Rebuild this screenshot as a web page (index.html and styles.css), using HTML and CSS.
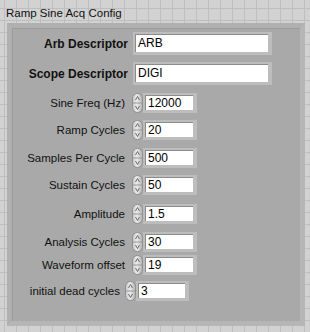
FILE: index.html
```html
<!DOCTYPE html>
<html>
<head>
    <meta charset="utf-8" />
    <title>Ramp Sine Acq Config</title>
    <link rel="stylesheet" href="styles.css">
</head>
<body>
    <div class="title">Ramp Sine Acq Config</div>
    <div class="cluster">
        <div class="row str">
            <span class="lbl">Arb Descriptor</span>
            <div class="sbox">ARB</div>
        </div>
        <div class="row str">
            <span class="lbl">Scope Descriptor</span>
            <div class="sbox">DIGI</div>
        </div>
        <div class="row num r1">
            <span class="lbl">Sine Freq (Hz)</span>
            <svg class="spin" viewBox="0 0 11 20"><rect x="0.5" y="0.5" width="10" height="19" rx="5" fill="url(#g)" stroke="#8e8e8e"/><line x1="1" y1="10" x2="10" y2="10" stroke="#9a9a9a"/><path d="M3.5 7 L5.5 3.5 L7.5 7" fill="none" stroke="#6a6a6a"/><path d="M3.5 13 L5.5 16.5 L7.5 13" fill="none" stroke="#6a6a6a"/></svg>
            <div class="nbox">12000</div>
        </div>
        <div class="row num r2">
            <span class="lbl">Ramp Cycles</span>
            <svg class="spin" viewBox="0 0 11 20"><rect x="0.5" y="0.5" width="10" height="19" rx="5" fill="url(#g)" stroke="#8e8e8e"/><line x1="1" y1="10" x2="10" y2="10" stroke="#9a9a9a"/><path d="M3.5 7 L5.5 3.5 L7.5 7" fill="none" stroke="#6a6a6a"/><path d="M3.5 13 L5.5 16.5 L7.5 13" fill="none" stroke="#6a6a6a"/></svg>
            <div class="nbox">20</div>
        </div>
        <div class="row num r3">
            <span class="lbl">Samples Per Cycle</span>
            <svg class="spin" viewBox="0 0 11 20"><rect x="0.5" y="0.5" width="10" height="19" rx="5" fill="url(#g)" stroke="#8e8e8e"/><line x1="1" y1="10" x2="10" y2="10" stroke="#9a9a9a"/><path d="M3.5 7 L5.5 3.5 L7.5 7" fill="none" stroke="#6a6a6a"/><path d="M3.5 13 L5.5 16.5 L7.5 13" fill="none" stroke="#6a6a6a"/></svg>
            <div class="nbox">500</div>
        </div>
        <div class="row num r4">
            <span class="lbl">Sustain Cycles</span>
            <svg class="spin" viewBox="0 0 11 20"><rect x="0.5" y="0.5" width="10" height="19" rx="5" fill="url(#g)" stroke="#8e8e8e"/><line x1="1" y1="10" x2="10" y2="10" stroke="#9a9a9a"/><path d="M3.5 7 L5.5 3.5 L7.5 7" fill="none" stroke="#6a6a6a"/><path d="M3.5 13 L5.5 16.5 L7.5 13" fill="none" stroke="#6a6a6a"/></svg>
            <div class="nbox">50</div>
        </div>
        <div class="row num r5">
            <span class="lbl">Amplitude</span>
            <svg class="spin" viewBox="0 0 11 20"><rect x="0.5" y="0.5" width="10" height="19" rx="5" fill="url(#g)" stroke="#8e8e8e"/><line x1="1" y1="10" x2="10" y2="10" stroke="#9a9a9a"/><path d="M3.5 7 L5.5 3.5 L7.5 7" fill="none" stroke="#6a6a6a"/><path d="M3.5 13 L5.5 16.5 L7.5 13" fill="none" stroke="#6a6a6a"/></svg>
            <div class="nbox">1.5</div>
        </div>
        <div class="row num r6">
            <span class="lbl">Analysis Cycles</span>
            <svg class="spin" viewBox="0 0 11 20"><rect x="0.5" y="0.5" width="10" height="19" rx="5" fill="url(#g)" stroke="#8e8e8e"/><line x1="1" y1="10" x2="10" y2="10" stroke="#9a9a9a"/><path d="M3.5 7 L5.5 3.5 L7.5 7" fill="none" stroke="#6a6a6a"/><path d="M3.5 13 L5.5 16.5 L7.5 13" fill="none" stroke="#6a6a6a"/></svg>
            <div class="nbox">30</div>
        </div>
        <div class="row num r7">
            <span class="lbl">Waveform offset</span>
            <svg class="spin" viewBox="0 0 11 20"><rect x="0.5" y="0.5" width="10" height="19" rx="5" fill="url(#g)" stroke="#8e8e8e"/><line x1="1" y1="10" x2="10" y2="10" stroke="#9a9a9a"/><path d="M3.5 7 L5.5 3.5 L7.5 7" fill="none" stroke="#6a6a6a"/><path d="M3.5 13 L5.5 16.5 L7.5 13" fill="none" stroke="#6a6a6a"/></svg>
            <div class="nbox">19</div>
        </div>
        <div class="row num r8">
            <span class="lbl">initial dead cycles</span>
            <svg class="spin" viewBox="0 0 11 20"><rect x="0.5" y="0.5" width="10" height="19" rx="5" fill="url(#g)" stroke="#8e8e8e"/><line x1="1" y1="10" x2="10" y2="10" stroke="#9a9a9a"/><path d="M3.5 7 L5.5 3.5 L7.5 7" fill="none" stroke="#6a6a6a"/><path d="M3.5 13 L5.5 16.5 L7.5 13" fill="none" stroke="#6a6a6a"/></svg>
            <div class="nbox">3</div>
        </div>
    </div>
    <svg class="defs" width="0" height="0">
        <defs>
            <linearGradient id="g" x1="0" y1="0" x2="1" y2="0">
                <stop offset="0" stop-color="#c4c4c4"/>
                <stop offset="0.45" stop-color="#ececec"/>
                <stop offset="1" stop-color="#b0b0b0"/>
            </linearGradient>
        </defs>
    </svg>
</body>
</html>
```

FILE: styles.css
```css
body {
    margin:0;
    width:310px;
    height:332px;
    overflow:hidden;
    font-family:"Liberation Sans", Arial, sans-serif;
    font-size:12px;
    color:#111;
    background-color:#d2d2d2;
    background-image:
        linear-gradient(to right, #bfbfbf 1px, transparent 1px),
        linear-gradient(to bottom, #bfbfbf 1px, transparent 1px);
    background-size:12px 12px;
    background-position:4px 8px;
}
.title {
    height:17px;
    line-height:17px;
    padding:5px 0 0 6px;
    white-space:nowrap;
    font-size:11.5px;
}
.cluster {
    margin:1px 0 0 7px;
    width:288px;
    height:289px;
    border:5px solid #b6b6b6;
    border-top-color:#b0b0b0;
    border-left-color:#b0b0b0;
    background:#a9a9a9;
    box-shadow:inset 1px 1px 0 #9a9a9a;
    padding-top:4px;
    box-sizing:content-box;
}
.row {
    display:flex;
    align-items:center;
}
.lbl {
    flex:none;
    text-align:right;
    white-space:nowrap;
}
.str {
    height:23px;
    margin-bottom:7px;
}
.str .lbl {
    width:116px;
    margin-right:5px;
    font-weight:bold;
    font-size:12px;
}
.sbox, .nbox {
    box-sizing:border-box;
    background:#fff;
    border:2px solid #bdbdbd;
    border-right-width:4px;
    border-bottom-width:3px;
    box-shadow:inset 1px 1px 0 #8c8c8c;
    padding-left:3px;
    color:#000;
    line-height:16px;
    font-size:12px;
}
.sbox {
    width:139px;
    height:23px;
    padding-top:1px;
}
.num {
    height:21px;
}
.num .lbl {
    width:113px;
    margin-right:7px;
    font-size:11.5px;
}
.spin {
    width:11px;
    height:20px;
    flex:none;
}
.nbox {
    width:54px;
    height:20px;
}
.r1 { margin-top:1px; }
.r2 { margin-top:6px; }
.r3 { margin-top:7px; }
.r4 { margin-top:6px; }
.r5 { margin-top:8px; }
.r6 { margin-top:7px; }
.r7 { margin-top:2px; }
.r8 { margin-top:5px; }
.r8 .lbl {
    width:108px;
    margin-right:5px;
}
.r8 .nbox {
    width:53px;
}
.defs {
    position:absolute;
}
```
